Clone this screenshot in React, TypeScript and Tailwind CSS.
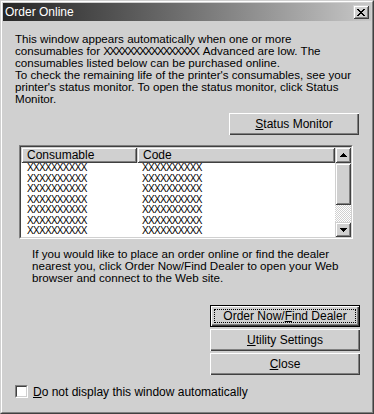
import React from "react";

const font = { fontFamily: '"Liberation Sans", Arial, sans-serif' };

function Btn({ children, w, isDefault }: { children: React.ReactNode; w: string; isDefault?: boolean }) {
  if (isDefault) {
    return (
      <div className={`${w} h-[22px] border border-black`}>
        <div className="h-full w-full bg-[#d0d0d0] shadow-[inset_1px_1px_0_#ffffff,inset_-1px_-1px_0_#404040,inset_-2px_-2px_0_#808080] p-[3px]">
          <div className="h-full w-full border border-dotted border-black flex items-center justify-center text-[12px] leading-none text-black">
            {children}
          </div>
        </div>
      </div>
    );
  }
  return (
    <div
      className={`${w} h-[22px] bg-[#d0d0d0] shadow-[inset_1px_1px_0_#ffffff,inset_-1px_-1px_0_#404040,inset_-2px_-2px_0_#808080] flex items-center justify-center text-[12px] leading-none text-black`}
    >
      {children}
    </div>
  );
}

function Raised({ className, children }: { className?: string; children?: React.ReactNode }) {
  return (
    <div
      className={`bg-[#d0d0d0] shadow-[inset_1px_1px_0_#d0d0d0,inset_-1px_-1px_0_#404040,inset_2px_2px_0_#ffffff,inset_-2px_-2px_0_#808080] ${className ?? ""}`}
    >
      {children}
    </div>
  );
}

const rows = Array.from({ length: 7 });

export default function App() {
  return (
    <div style={font} className="w-[374px] h-[414px] bg-[#d0d0d0] border border-t-[#d0d0d0] border-l-[#d0d0d0] border-r-[#404040] border-b-[#404040]">
      <div className="h-full w-full border border-t-white border-l-white border-r-[#808080] border-b-[#808080] flex flex-col">
        {/* title bar */}
        <div className="mx-px mt-px h-[18px] bg-gradient-to-r from-[#262626] to-[#c8c8c8] flex items-center justify-between pl-[2px] pr-[2px]">
          <span className="text-white text-[12px] leading-none">Order Online</span>
          <Raised className="w-[16px] h-[14px] flex items-center justify-center">
            <svg width="8" height="7" viewBox="0 0 8 7">
              <path d="M0 0h2v1h-2z M6 0h2v1h-2z M1 1h2v1h-2z M5 1h2v1h-2z M2 2h4v1h-4z M3 3h2v1h-2z M2 4h4v1h-4z M1 5h2v1h-2z M5 5h2v1h-2z M0 6h2v1h-2z M6 6h2v1h-2z" fill="#000" />
            </svg>
          </Raised>
        </div>

        {/* content */}
        <div className="flex flex-col text-black text-[12px]">
          <div className="ml-[13px] mt-[12px] text-[11.6px] leading-[12px] whitespace-nowrap">
            <div>This window appears automatically when one or more</div>
            <div>
              consumables for <span className="tracking-[-1.8px] mr-[2px]">XXXXXXXXXXXXXXXX</span> Advanced are low. The
            </div>
            <div>consumables listed below can be purchased online.</div>
            <div>To check the remaining life of the printer's consumables, see your</div>
            <div>printer's status monitor. To open the status monitor, click Status</div>
            <div>Monitor.</div>
          </div>

          <div className="flex justify-end mr-[13px] mt-[8px]">
            <Btn w="w-[130px]">
              <span>
                <span className="underline">S</span>tatus Monitor
              </span>
            </Btn>
          </div>

          {/* list view */}
          <div className="ml-[17px] mt-[10px] w-[334px] h-[94px] border border-t-[#808080] border-l-[#808080] border-r-white border-b-white">
            <div className="h-full w-full border border-t-[#404040] border-l-[#404040] border-r-[#d0d0d0] border-b-[#d0d0d0] bg-white flex">
              <div className="flex-1 flex flex-col overflow-hidden">
                <div className="flex h-[16px] shrink-0">
                  <Raised className="w-[116px] h-full pl-[6px] flex items-center leading-none">
                    <span>Consumable</span>
                  </Raised>
                  <Raised className="flex-1 h-full pl-[6px] flex items-center leading-none">
                    <span>Code</span>
                  </Raised>
                </div>
                {rows.map((_, i) => (
                  <div key={i} className="flex h-[10.5px] leading-[10.5px] text-[10px] shrink-0 tracking-[-0.7px]">
                    <div className="w-[116px] pl-[6px]">XXXXXXXXXX</div>
                    <div className="pl-[5px]">XXXXXXXXXX</div>
                  </div>
                ))}
              </div>
              {/* scrollbar */}
              <div className="w-[16px] flex flex-col">
                <Raised className="h-[16px] shrink-0 flex items-center justify-center">
                  <svg width="7" height="4" viewBox="0 0 7 4">
                    <path d="M3 0h1v1h1v1h1v1h1v1h-7v-1h1v-1h1v-1h1z" fill="#000" />
                  </svg>
                </Raised>
                <Raised className="h-[42px] shrink-0" />
                <div className="flex-1 bg-[repeating-conic-gradient(#ffffff_0_25%,#d0d0d0_0_50%)] bg-[length:2px_2px]" />
                <Raised className="h-[15px] shrink-0 flex items-center justify-center">
                  <svg width="7" height="4" viewBox="0 0 7 4">
                    <path d="M0 0h7v1h-1v1h-1v1h-1v1h-1v-1h-1v-1h-1v-1h-1z" fill="#000" />
                  </svg>
                </Raised>
              </div>
            </div>
          </div>

          <div className="ml-[30px] mt-[9px] text-[11.6px] leading-[12px] whitespace-nowrap">
            <div>If you would like to place an order online or find the dealer</div>
            <div>nearest you, click Order Now/Find Dealer to open your Web</div>
            <div>browser and connect to the Web site.</div>
          </div>

          <div className="self-end mr-[12px] mt-[21px] flex flex-col gap-[2px]">
            <Btn w="w-[150px]" isDefault>
              <span>
                Order Now/<span className="underline">F</span>ind Dealer
              </span>
            </Btn>
            <Btn w="w-[150px]">
              <span>
                <span className="underline">U</span>tility Settings
              </span>
            </Btn>
            <Btn w="w-[150px]">
              <span>
                <span className="underline">C</span>lose
              </span>
            </Btn>
          </div>

          <div className="ml-[13px] mt-[10px] flex items-center gap-[5px]">
            <div className="w-[13px] h-[13px] border border-t-[#808080] border-l-[#808080] border-r-white border-b-white">
              <div className="w-full h-full bg-white border border-t-[#404040] border-l-[#404040] border-r-[#d0d0d0] border-b-[#d0d0d0]" />
            </div>
            <span className="leading-none">
              <span className="underline">D</span>o not display this window automatically
            </span>
          </div>
        </div>
      </div>
    </div>
  );
}
